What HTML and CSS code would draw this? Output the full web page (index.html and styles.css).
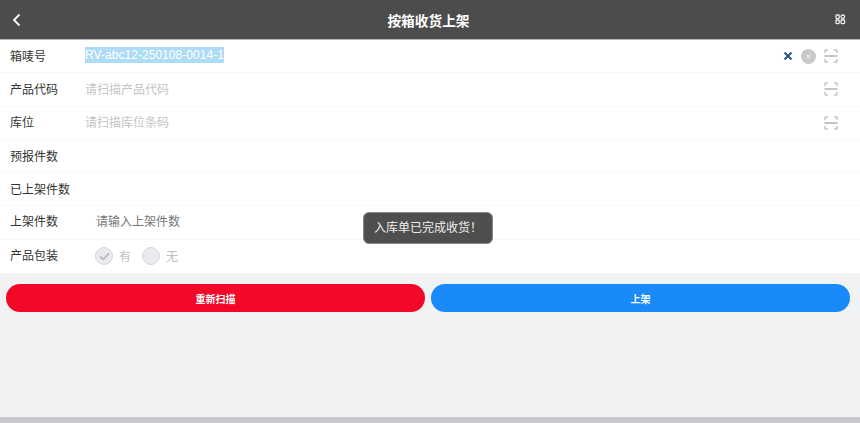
FILE: index.html
```html
<!DOCTYPE html>
<html lang="zh-CN">
<head>
    <meta charset="UTF-8">
    <title>按箱收货上架</title>
    <link rel="stylesheet" href="styles.css">
</head>
<body>
<!-- Header -->
<div class="header">
    <svg class="back-icon" width="10" height="14" viewBox="0 0 10 14"><path d="M7.5 1.5 L2 7 L7.5 12.5" fill="none" stroke="#fff" stroke-width="1.8"/></svg>
    <div class="header-title">按箱收货上架</div>
    <svg class="menu-icon" width="11" height="11" viewBox="0 0 11 11">
        <g fill="#4c4c4c" stroke="#ececec" stroke-width="1.3">
            <rect x="1" y="1" width="3.2" height="3.6" rx="0.8"/>
            <rect x="6" y="1" width="3.6" height="3.6" rx="1.8"/>
            <rect x="1" y="6" width="3.2" height="3.6" rx="0.8"/>
            <rect x="6" y="6" width="3.6" height="3.6" rx="0.8"/>
        </g>
    </svg>
</div>

<!-- Form -->
<div class="form">
    <div class="row">
        <div class="label">箱唛号</div>
        <div class="value"><span class="selected">RV-abc12-250108-0014-1</span></div>
        <svg class="x-icon" width="10" height="10" viewBox="0 0 10 10"><path d="M1.5 1.5 L8.5 8.5 M8.5 1.5 L1.5 8.5" stroke="#2f5597" stroke-width="2.2"/></svg>
        <svg class="clear-icon" width="15" height="15" viewBox="0 0 15 15"><circle cx="7.5" cy="7.5" r="7.5" fill="#c8c8c8"/><path d="M5.3 5.3 L9.7 9.7 M9.7 5.3 L5.3 9.7" stroke="#e8e8e8" stroke-width="1.2"/></svg>
        <svg class="scan-icon" width="14" height="14" viewBox="0 0 14 14"><path d="M1 4 V1 H4 M10 1 H13 V4 M1 10 V13 H4 M10 13 H13 V10" fill="none" stroke="#a8a8a8"/><path d="M0.5 7 H13.5" stroke="#c4c4c4" stroke-width="2"/></svg>
    </div>
    <div class="row">
        <div class="label">产品代码</div>
        <div class="value placeholder">请扫描产品代码</div>
        <svg class="scan-icon" width="14" height="14" viewBox="0 0 14 14"><path d="M1 4 V1 H4 M10 1 H13 V4 M1 10 V13 H4 M10 13 H13 V10" fill="none" stroke="#a8a8a8"/><path d="M0.5 7 H13.5" stroke="#c4c4c4" stroke-width="2"/></svg>
    </div>
    <div class="row">
        <div class="label">库位</div>
        <div class="value placeholder">请扫描库位条码</div>
        <svg class="scan-icon" width="14" height="14" viewBox="0 0 14 14"><path d="M1 4 V1 H4 M10 1 H13 V4 M1 10 V13 H4 M10 13 H13 V10" fill="none" stroke="#a8a8a8"/><path d="M0.5 7 H13.5" stroke="#c4c4c4" stroke-width="2"/></svg>
    </div>
    <div class="row">
        <div class="label">预报件数</div>
    </div>
    <div class="row">
        <div class="label">已上架件数</div>
    </div>
    <div class="row tight">
        <div class="label">上架件数</div>
        <div class="value qty">请输入上架件数</div>
    </div>
    <div class="row last tight">
        <div class="label">产品包装</div>
        <div class="radios">
            <span class="radio">
                <svg width="11" height="9" viewBox="0 0 11 9"><path d="M1 4.5 L4.2 7.5 L10 1.2" fill="none" stroke="#bcbcbc" stroke-width="1.8"/></svg>
            </span>
            <span class="radio-text">有</span>
            <span class="radio"></span>
            <span class="radio-text">无</span>
        </div>
    </div>
</div>

<!-- Buttons -->
<div class="buttons">
    <button class="btn btn-red">重新扫描</button>
    <button class="btn btn-blue">上架</button>
</div>

<div class="toast">入库单已完成收货！</div>

<div class="bottom-bar"></div>
</body>
</html>
```

FILE: styles.css
```css
/* General Styles */
html, body {
    height: 100%;
}

body {
    font-family: "Liberation Sans", "Noto Sans CJK SC", sans-serif;
    font-size: 12px;
    background-color: #f1f2f4;
    color: #333;
    margin: 0;
    padding: 0;
    display: flex;
    flex-direction: column;
    overflow: hidden;
}

/* Header */
.header {
    background-color: #4c4c4c;
    height: 39px;
    border-bottom: 1px solid #b5b5b5;
    display: flex;
    align-items: center;
    padding: 0 14px 0 12px;
    flex-shrink: 0;
}

.header-title {
    flex: 1;
    text-align: center;
    color: #fff;
    font-size: 13.7px;
    font-weight: bold;
}

/* Form */
.form {
    background-color: #fff;
    flex-shrink: 0;
}

.row {
    height: 32.3px;
    border-bottom: 1px solid #f8f8f8;
    display: flex;
    align-items: center;
    padding: 0 22px 0 10px;
}

.row.last {
    height: 33.3px;
    border-bottom: none;
}

.label {
    width: 75px;
    flex-shrink: 0;
    margin-bottom: 2px;
}

.value {
    flex: 1;
    margin-bottom: 2px;
}

.tight .label,
.tight .value {
    margin-bottom: 4px;
}

.placeholder {
    color: #c4c4c4;
}

.selected {
    background-color: #aedcf6;
    color: #fff;
    display: inline-block;
    line-height: 16px;
    letter-spacing: 0.05px;
}

.qty {
    padding-left: 11px;
    color: #777;
}

.x-icon {
    margin-right: 8px;
}

.clear-icon {
    margin-right: 8px;
}

.radios {
    display: flex;
    align-items: center;
    padding-left: 10px;
}

.radio {
    width: 16px;
    height: 16px;
    border-radius: 50%;
    border: 1px solid #d8d8dc;
    background-color: #ebebef;
    display: flex;
    align-items: center;
    justify-content: center;
}

.radio-text {
    color: #c0c0c0;
    margin: 0 11px 2px 6px;
}

/* Buttons */
.buttons {
    display: flex;
    gap: 6px;
    padding: 11px 10px 0 6px;
}

.btn {
    flex: 1;
    height: 28px;
    border: none;
    border-radius: 14px;
    color: #fff;
    font-family: inherit;
    font-size: 10px;
    font-weight: bold;
    padding: 0;
}

.btn-red {
    background-color: #f30828;
}

.btn-blue {
    background-color: #1a8afa;
}

/* Toast */
.toast {
    position: absolute;
    left: 363px;
    top: 212px;
    width: 130px;
    height: 32px;
    line-height: 31px;
    box-sizing: border-box;
    border: 1px solid #8a8a8a;
    border-radius: 6px;
    background-color: #4f4f4f;
    color: #eee;
    text-align: center;
}

/* Bottom bar */
.bottom-bar {
    margin-top: auto;
    height: 6px;
    background-color: #c8c8cc;
    flex-shrink: 0;
}
```
